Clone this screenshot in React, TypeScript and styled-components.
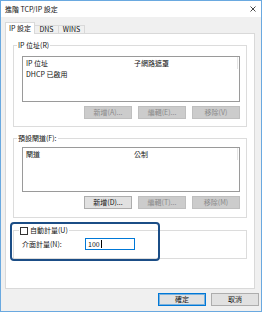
import React from 'react';
import styled, { createGlobalStyle } from 'styled-components';

const Global = createGlobalStyle`
  html, body { margin: 0; padding: 0; }
  body {
    width: 262px; height: 312px; overflow: hidden;
    font-family: "Noto Sans CJK TC", "Noto Sans", sans-serif;
    font-size: 7px; color: #111;
  }
  * { box-sizing: border-box; }
`;

const Window = styled.div`
  width: 262px;
  height: 312px;
  border: 1px solid #6aa9e0;
  display: flex;
  flex-direction: column;
  background: #f0f0f0;
`;

const TitleBar = styled.div`
  height: 16px;
  flex: none;
  background: #fff;
  display: flex;
  align-items: center;
  justify-content: space-between;
  padding: 0 5px 0 4px;
  line-height: 9px;
`;

const Body = styled.div`
  flex: 1;
  display: flex;
  flex-direction: column;
  padding: 5px 0 0 4px;
`;

const TabRow = styled.div`
  display: flex;
  align-items: flex-end;
  height: 12px;
  margin-bottom: -1px;
  position: relative;
  z-index: 1;
`;

const Tab = styled.div<{ $active?: boolean; $w: number }>`
  width: ${p => p.$w}px;
  height: ${p => (p.$active ? 12 : 9)}px;
  background: ${p => (p.$active ? '#fff' : '#f0f0f0')};
  border: 1px solid #d9d9d9;
  border-bottom: ${p => (p.$active ? 'none' : '1px solid #d9d9d9')};
  margin-left: ${p => (p.$active ? 0 : -1)}px;
  display: flex;
  align-items: center;
  justify-content: center;
  line-height: 9px;
`;

const Panel = styled.div`
  width: 250px;
  height: 256px;
  background: #fff;
  border: 1px solid #d9d9d9;
  padding: 11px 0 0 7px;
  display: flex;
  flex-direction: column;
`;

const Group = styled.div<{ $h: number; $pt: number; $mt: number }>`
  position: relative;
  width: 234px;
  height: ${p => p.$h}px;
  margin-top: ${p => p.$mt}px;
  border: 1px solid #dcdcdc;
  padding: ${p => p.$pt}px 6px 0 8px;
  display: flex;
  flex-direction: column;
`;

const Legend = styled.div<{ $left?: number }>`
  position: absolute;
  top: -5px;
  left: ${p => p.$left ?? 3}px;
  padding: 0 1px;
  background: #fff;
  line-height: 9px;
  display: flex;
  align-items: center;
  gap: 2px;
`;

const ListBox = styled.div<{ $h: number }>`
  height: ${p => p.$h}px;
  border: 1px solid #9a9a9a;
  padding-top: 1px;
  position: relative;
`;

const HeaderEnd = styled.div`
  position: absolute;
  right: 1px;
  top: 0;
  width: 1px;
  height: 12px;
  background: #e5e5e5;
`;

const Row = styled.div`
  display: flex;
  height: 11px;
  line-height: 11px;
  padding-left: 3px;
`;

const Cell = styled.div<{ $w?: number }>`
  width: ${p => (p.$w ? `${p.$w}px` : 'auto')};
  white-space: nowrap;
`;

const ButtonRow = styled.div`
  display: flex;
  justify-content: flex-end;
  gap: 6px;
  margin-top: 4px;
`;

const Button = styled.div<{ $disabled?: boolean; $default?: boolean }>`
  width: 48px;
  height: 13px;
  display: flex;
  align-items: center;
  justify-content: center;
  line-height: 9px;
  background: ${p => (p.$disabled ? '#cccccc' : '#e1e1e1')};
  border: 1px solid ${p => (p.$disabled ? '#bfbfbf' : p.$default ? '#0078d7' : '#adadad')};
  box-shadow: ${p => (p.$default ? 'inset 0 0 0 1px rgba(0,120,215,0.45)' : 'none')};
  color: ${p => (p.$disabled ? '#8a8a8a' : '#111')};
`;

const CheckBox = styled.div`
  width: 8px;
  height: 8px;
  border: 1px solid #333;
  background: #fff;
`;

const MetricRow = styled.div`
  display: flex;
  align-items: center;
`;

const MetricLabel = styled.div`
  width: 63px;
  line-height: 9px;
`;

const Input = styled.div`
  width: 50px;
  height: 12px;
  border: 1px solid #0078d7;
  display: flex;
  align-items: center;
  padding-left: 2px;
  line-height: 9px;
`;

const Caret = styled.span`
  display: inline-block;
  width: 1px;
  height: 8px;
  background: #000;
  margin-left: 1px;
`;

const Highlight = styled.div`
  position: absolute;
  top: -9px;
  left: -4px;
  width: 150px;
  height: 39px;
  border: 2px solid #1b4d86;
  border-radius: 4px;
  pointer-events: none;
`;

const Footer = styled.div`
  display: flex;
  justify-content: flex-end;
  gap: 5px;
  padding-right: 2px;
  margin-top: 4px;
`;

const CloseIcon = () => (
  <svg width="6" height="6" viewBox="0 0 6 6">
    <path d="M0.5 0.5 L5.5 5.5 M5.5 0.5 L0.5 5.5" stroke="#333" strokeWidth="0.9" />
  </svg>
);

export default function App() {
  return (
    <>
      <Global />
      <Window>
        <TitleBar>
          <span>進階 TCP/IP 設定</span>
          <CloseIcon />
        </TitleBar>
        <Body>
          <TabRow>
            <Tab $active $w={30}>IP 設定</Tab>
            <Tab $w={25}>DNS</Tab>
            <Tab $w={27}>WINS</Tab>
          </TabRow>
          <Panel>
            <Group $h={82} $pt={10} $mt={0}>
              <Legend>IP 位址(R)</Legend>
              <ListBox $h={46}>
                <HeaderEnd />
                <Row>
                  <Cell $w={108}>IP 位址</Cell>
                  <Cell>子網路遮罩</Cell>
                </Row>
                <Row>
                  <Cell $w={108}>DHCP 已啟用</Cell>
                </Row>
              </ListBox>
              <ButtonRow>
                <Button $disabled>新增(A)...</Button>
                <Button $disabled>編輯(E)...</Button>
                <Button $disabled>移除(V)</Button>
              </ButtonRow>
            </Group>
            <Group $h={80} $pt={8} $mt={11}>
              <Legend>預設閘道(F):</Legend>
              <ListBox $h={45}>
                <HeaderEnd />
                <Row>
                  <Cell $w={108}>閘道</Cell>
                  <Cell>公制</Cell>
                </Row>
              </ListBox>
              <ButtonRow>
                <Button>新增(D)...</Button>
                <Button $disabled>編輯(T)...</Button>
                <Button $disabled>移除(M)</Button>
              </ButtonRow>
            </Group>
            <Group $h={29} $pt={7} $mt={12}>
              <Legend $left={5}>
                <CheckBox />
                <span>自動計量(U)</span>
              </Legend>
              <MetricRow>
                <MetricLabel>介面計量(N):</MetricLabel>
                <Input>
                  100<Caret />
                </Input>
              </MetricRow>
              <Highlight />
            </Group>
          </Panel>
          <Footer>
            <Button $default>確定</Button>
            <Button>取消</Button>
          </Footer>
        </Body>
      </Window>
    </>
  );
}
